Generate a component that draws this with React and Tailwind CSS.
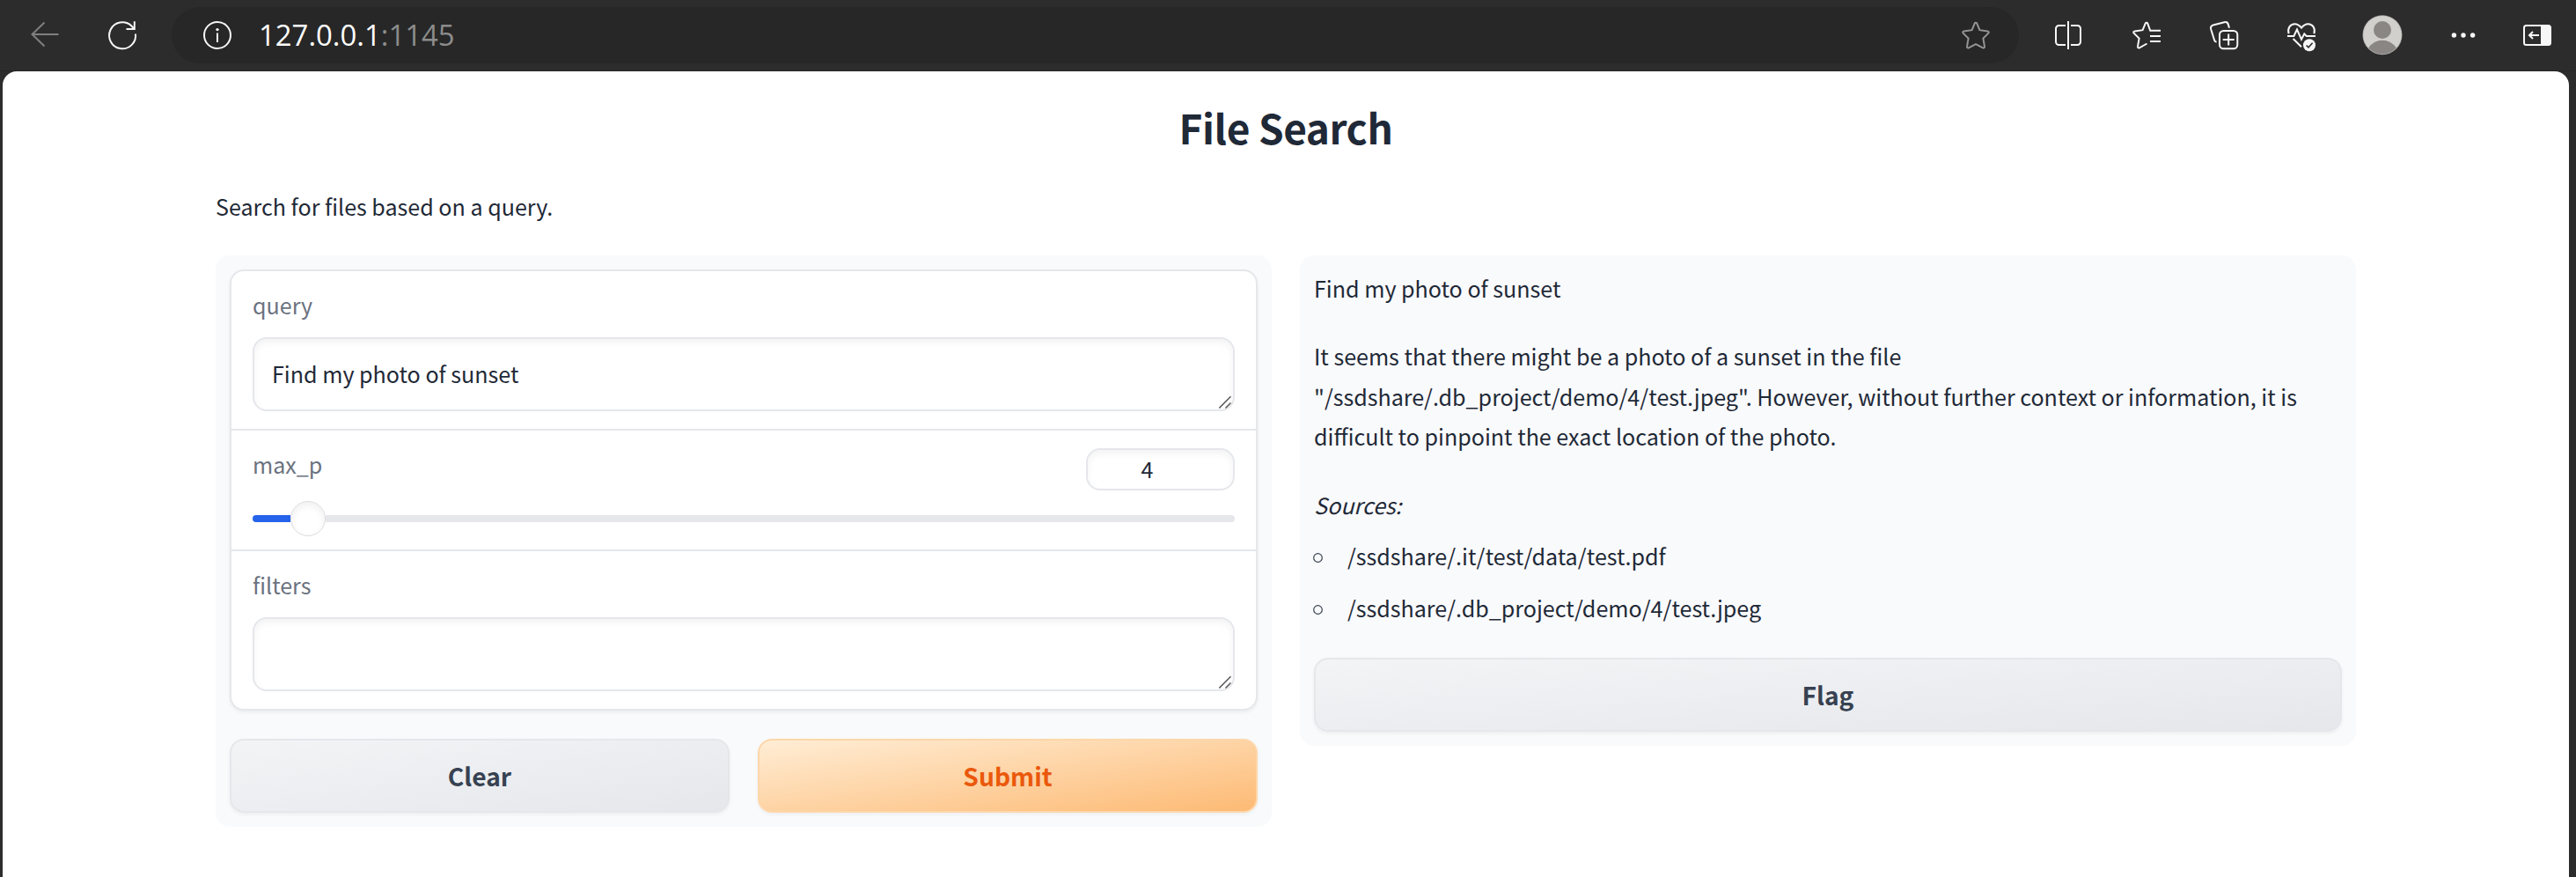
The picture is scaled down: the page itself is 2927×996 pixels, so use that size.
const STAR =
  "M14.7 2.6a1.5 1.5 0 0 1 2.6 0L20.4 10.2L29.6 11.4a1.3 1.3 0 0 1 .8 2.2L24.4 19.6L26 28.9a1.3 1.3 0 0 1-1.9 1.4L16 26.2L7.9 30.3A1.3 1.3 0 0 1 6 28.9L7.6 19.6L1.6 13.6a1.3 1.3 0 0 1 .8-2.2L11.6 10.2Z";

function Icon({ className = "", children }) {
  return (
    <svg
      viewBox="0 0 32 32"
      fill="none"
      stroke="currentColor"
      strokeWidth="2"
      className={`size-8 shrink-0 overflow-visible ${className}`}
    >
      {children}
    </svg>
  );
}

function Toolbar() {
  return (
    <header className="flex h-[81px] flex-col border-b border-[#282426] bg-[#2c2c2c] text-[#f7f7f7]">
      <div className="flex h-px justify-between">
        <div className="w-[2284px] bg-[#4c4c4c]" />
        <div className="w-[385px] bg-[#4c4c4c]" />
      </div>
      <div className="flex h-20 shrink-0 items-center">
        <Icon className="ml-[35px] text-[#7f7f7f]">
          <path d="M31.5 15H1.5M15.5 1.5L1.5 15L15.5 28.5" />
        </Icon>
        <Icon className="ml-14">
          <path d="M31 14.5A15 15 0 1 1 26.2 5.2L29.5 8.8" />
          <path d="M29.8 .3V9H20.5" />
        </Icon>
        <div className="ml-10 flex h-16 w-[2099px] shrink-0 items-center rounded-full bg-[#272727] pr-[33px] pl-9">
          <Icon>
            <circle cx="16" cy="16" r="15" />
            <path d="M16 13.5V24" />
            <circle cx="16" cy="9.6" r="1.7" fill="currentColor" stroke="none" />
          </Icon>
          <div className="ml-[31px] font-['Open_Sans','Noto_Sans',sans-serif] text-[32.9px] leading-[44px] font-normal text-white">
            127.0.0.1<span className="text-[#8c8c8c]">:1145</span>
          </div>
          <Icon className="ml-auto text-[#949494]">
            <path d={STAR} />
          </Icon>
        </div>
        <Icon className="ml-10">
          <path d="M13 5H5.5a3.5 3.5 0 0 0-3.5 3.5V23.5a3.5 3.5 0 0 0 3.5 3.5H13M19 5H26.5a3.5 3.5 0 0 1 3.5 3.5V23.5a3.5 3.5 0 0 1-3.5 3.5H19M16 0V32" />
        </Icon>
        <Icon className="ml-[57px]">
          <path d="M16.5 25.5L7.9 30.3A1.3 1.3 0 0 1 6 28.9L7.6 19.6L1.6 13.6a1.3 1.3 0 0 1 .8-2.2L11.6 10.2L14.7 2.6a1.5 1.5 0 0 1 2.6 0L20.2 10.8H32M20 17H32M20 23H32" />
        </Icon>
        <Icon className="ml-14">
          <path d="M7.6 23.6C6.2 23.6 5.3 22.4 4.9 21L1.2 9.2C.6 7 1.6 5.2 3.7 4.5L16.4 1.2C18.6.7 20.2 1.6 20.8 3.6L22 7.8" />
          <rect x="11" y="11" width="20.3" height="20.3" rx="4.5" />
          <path d="M21.2 14.6V27.6M14.7 21.1H27.7" />
        </Icon>
        <Icon className="ml-14">
          <path d="M1.6 14.2C-.2 8 3.4 3.3 8.4 3.3C11.8 3.3 13.8 5 16 7.6C18.2 5 20.2 3.3 23.6 3.3C28.6 3.3 32.2 8 30.4 14.2" />
          <path d="M0 17H7.4L11 9.5L16 20.8L19.3 14.5L21.8 17H32M6.6 20L16 29.2" />
          <circle cx="25" cy="27.3" r="7" fill="currentColor" stroke="none" />
          <path d="M21.6 27.5L24 29.9L28.6 24.8" stroke="#2c2c2c" strokeWidth="1.6" />
        </Icon>
        <svg viewBox="0 0 46 46" className="ml-[53px] size-[46px] shrink-0">
          <defs>
            <clipPath id="avatar">
              <circle cx="23" cy="22.7" r="21.7" />
            </clipPath>
          </defs>
          <circle cx="23" cy="22.7" r="22.5" fill="#a9a7a5" />
          <circle cx="23" cy="22.7" r="21.7" fill="#d2d0cd" />
          <circle cx="23" cy="17" r="10" fill="#8a8684" />
          <circle cx="23" cy="47.5" r="18.8" fill="#8a8684" clipPath="url(#avatar)" />
        </svg>
        <Icon className="ml-[53px]">
          <g fill="currentColor" stroke="none">
            <circle cx="5.4" cy="16" r="2.7" />
            <circle cx="16" cy="16" r="2.7" />
            <circle cx="26.6" cy="16" r="2.7" />
          </g>
        </Icon>
        <Icon className="ml-[52px]">
          <rect x="1" y="5" width="30" height="22" rx="2.5" />
          <path d="M20 5H29a2 2 0 0 1 2 2V25a2 2 0 0 1-2 2H20Z" fill="currentColor" stroke="none" />
          <path d="M18 16H7.4M11 12L7 16L11 20" />
        </Icon>
      </div>
    </header>
  );
}

function TextArea({ children }) {
  return (
    <div className="relative mt-[19px] h-[84px] rounded-2xl border-2 border-[#e5e7eb] bg-white px-5 pt-[18px] text-[#1f2937] shadow-[inset_0_4px_8px_0_rgba(0,0,0,0.05)]">
      <div className="leading-[42px]">{children}</div>
      <svg
        viewBox="0 0 14 14"
        stroke="#555"
        strokeWidth="1.5"
        className="absolute right-[2px] bottom-[1px] size-[14px]"
      >
        <path d="M.3 13.5L13.5 .3M7.5 13.5L13.5 7.5" />
      </svg>
    </div>
  );
}

function Button({ primary, children }) {
  const tone = primary
    ? "border-[#fed7aa] bg-[linear-gradient(to_bottom_right,#ffedd5,#fdba74)] text-[#ea580c]"
    : "border-[#e5e7eb] bg-[linear-gradient(to_bottom_right,#f3f4f6,#e5e7eb)] text-[#374151]";
  return (
    <button
      className={`flex h-[84px] flex-1 items-center justify-center rounded-2xl border-2 pb-px text-[28.2px] leading-[44px] font-bold shadow-[0_2px_4px_0_rgba(0,0,0,0.05)] ${tone}`}
    >
      {children}
    </button>
  );
}

function Source({ children }) {
  return (
    <li className="mt-[13px] flex items-center gap-7">
      <svg viewBox="0 0 11 11" className="mt-[4px] -ml-px size-[11px]" fill="none" stroke="#374151" strokeWidth="1.2">
        <circle cx="5.5" cy="5.5" r="4.8" />
      </svg>
      <span>{children}</span>
    </li>
  );
}

export default function App() {
  return (
    <div className="flex h-[996px] w-[2927px] flex-col overflow-hidden bg-[#2c2c2c] font-['Noto_Sans_CJK_SC','Noto_Sans',sans-serif] text-[25.07px] text-[#1f2937]">
      <Toolbar />
      <main className="mr-2 ml-[3px] flex-1 rounded-t-2xl bg-white pr-[242px] pl-[242px]">
        <h1 className="pt-[33px] text-center text-[46px] leading-[60px] font-bold tracking-[-0.45px]">
          File Search
        </h1>
        <p className="mt-[39px] leading-[42px]">Search for files based on a query.</p>
        <div className="mt-[35px] flex items-start gap-8">
          <section className="w-[1200px] rounded-2xl bg-[#f9fafc] p-4">
            <div className="rounded-2xl border-2 border-[#e5e7eb] bg-white text-[#6b7280] shadow-[0_2px_4px_0_rgba(0,0,0,0.06)]">
              <div className="border-b-2 border-[#e5e7eb] px-6 py-5">
                <div className="leading-9">query</div>
                <TextArea>Find my photo of sunset</TextArea>
              </div>
              <div className="border-b-2 border-[#e5e7eb] px-6 pt-5 pb-[15px]">
                <div className="flex items-start justify-between leading-9">
                  <span>max_p</span>
                  <div className="h-12 w-[169px] rounded-2xl border-2 border-[#e5e7eb] bg-white pt-[3px] pr-[30px] text-center text-[#1f2937] shadow-[inset_0_4px_8px_0_rgba(0,0,0,0.05)]">
                    4
                  </div>
                </div>
                <div className="mt-3 flex h-10 items-center">
                  <div className="h-2 w-[43px] rounded-l bg-[#2563eb]" />
                  <div className="size-10 rounded-full border border-[#dcdcdf] bg-white shadow-[inset_0_4px_8px_0_rgba(0,0,0,0.06)]" />
                  <div className="h-2 flex-1 rounded-r bg-[#e5e7eb]" />
                </div>
              </div>
              <div className="px-6 py-5">
                <div className="leading-9">filters</div>
                <TextArea />
              </div>
            </div>
            <div className="mt-8 flex gap-8">
              <Button>Clear</Button>
              <Button primary>Submit</Button>
            </div>
          </section>
          <section className="w-[1200px] rounded-2xl bg-[#f9fafc] px-4 pt-[14.5px] pb-4 leading-[45.5px]">
            <p>Find my photo of sunset</p>
            <p className="mt-8">
              It seems that there might be a photo of a sunset in the file
              <br />
              "/ssdshare/.db_project/demo/4/test.jpeg". However, without further context or information, it is
              <br />
              difficult to pinpoint the exact location of the photo.
            </p>
            <p className="mt-8 italic">Sources:</p>
            <ul>
              <Source>/ssdshare/.it/test/data/test.pdf</Source>
              <Source>/ssdshare/.db_project/demo/4/test.jpeg</Source>
            </ul>
            <div className="mt-[34px] flex">
              <Button>Flag</Button>
            </div>
          </section>
        </div>
      </main>
    </div>
  );
}
